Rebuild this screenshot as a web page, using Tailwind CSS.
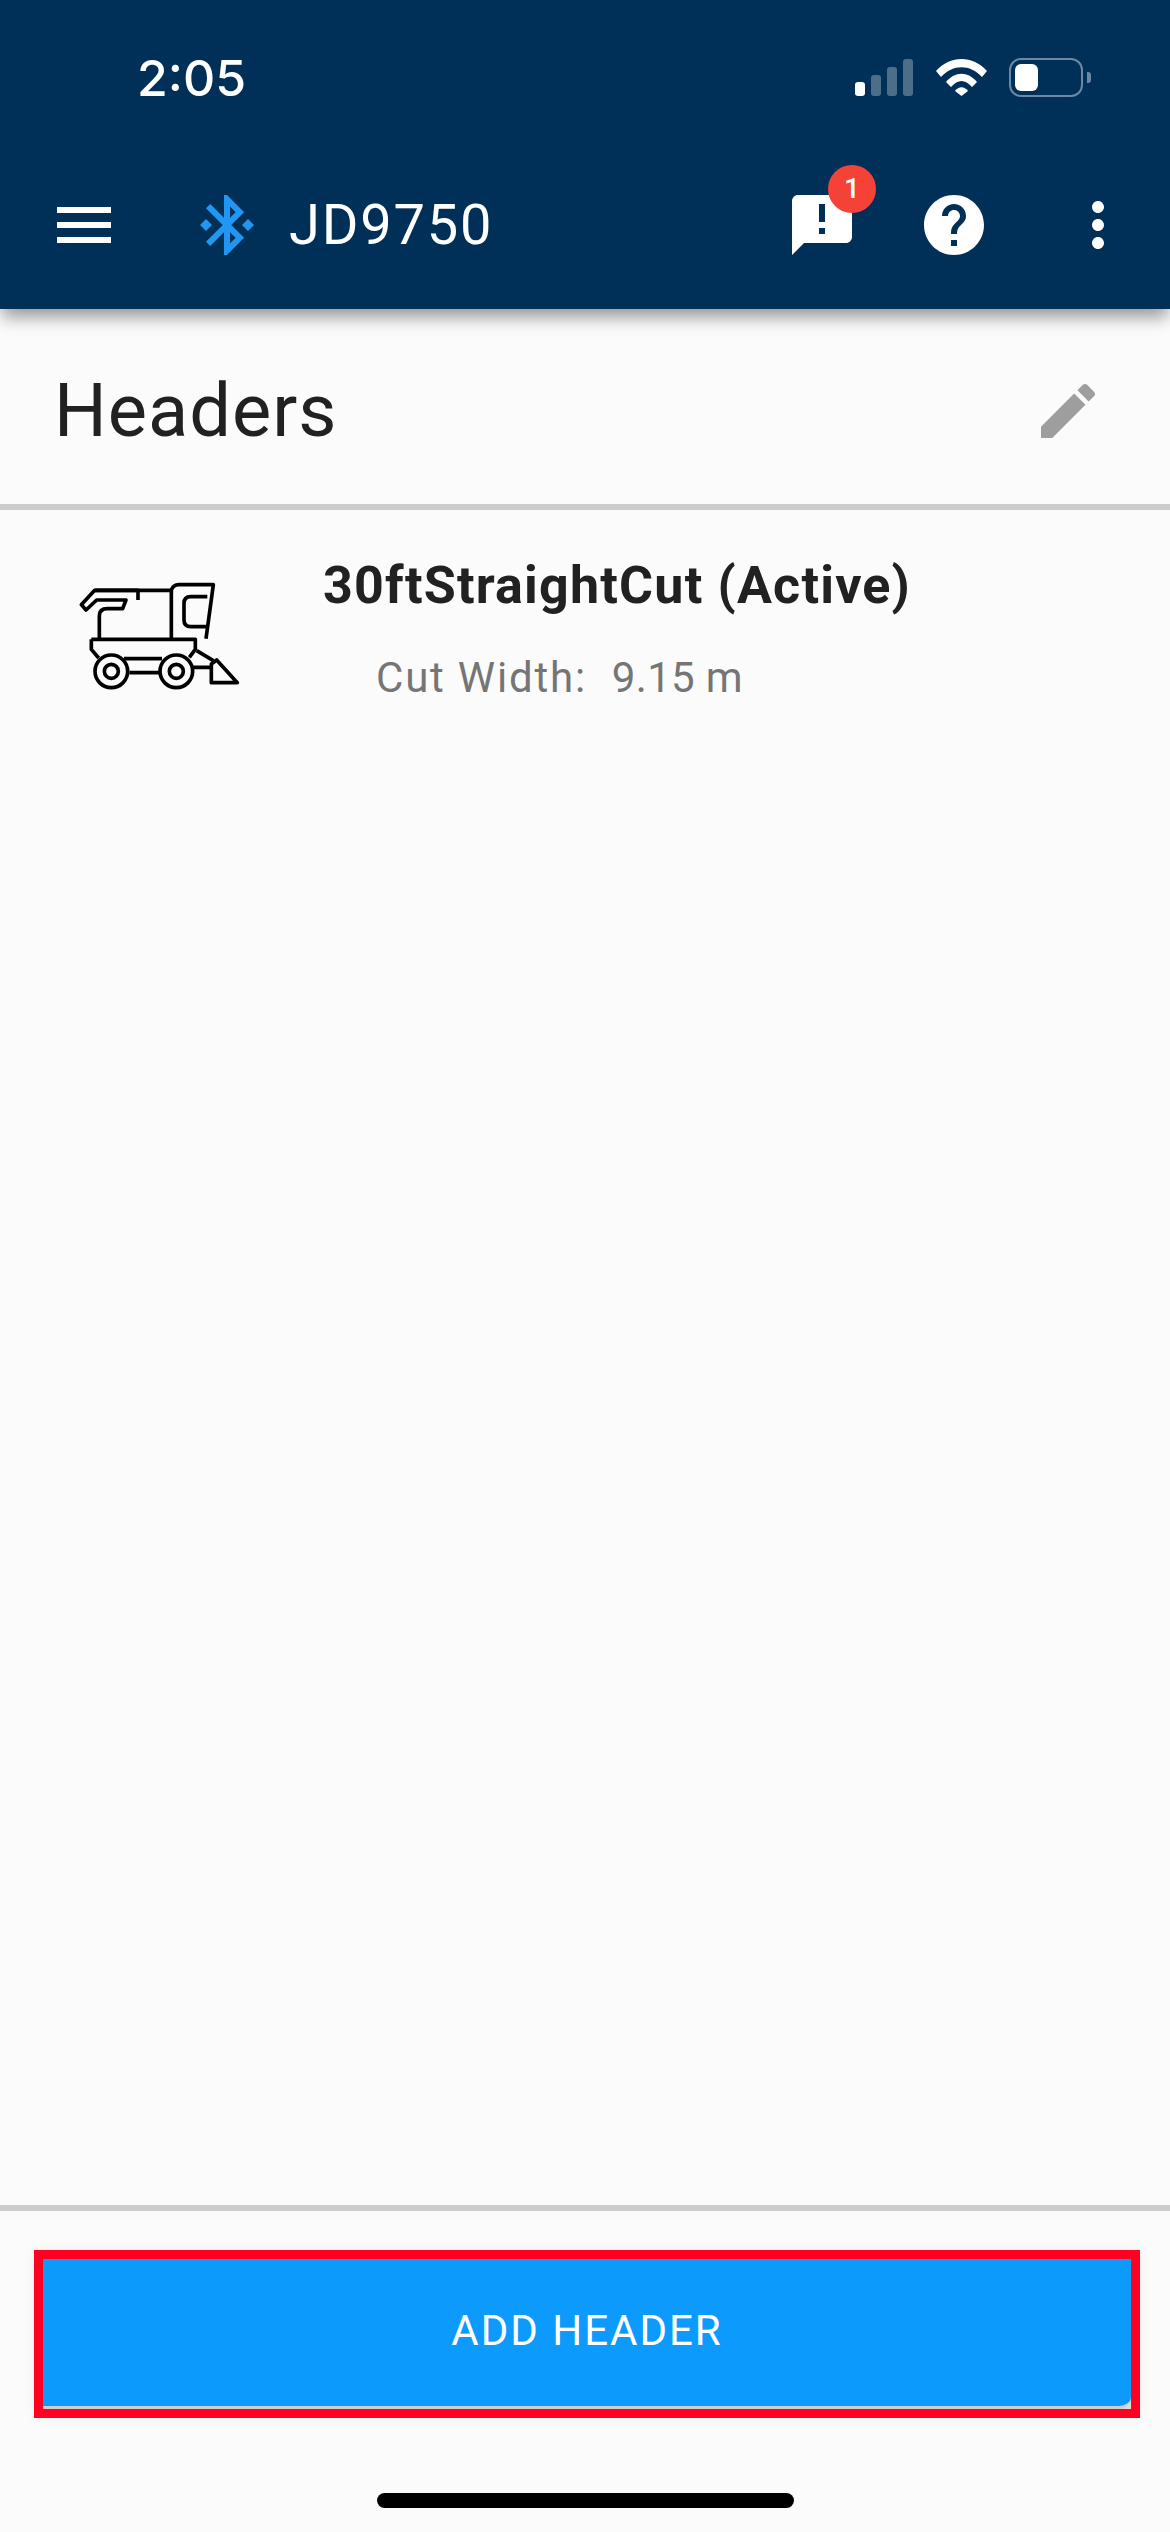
<!DOCTYPE html>
<html lang="en">
<head>
    <meta charset="UTF-8">
    <meta name="viewport" content="width=device-width, initial-scale=1.0">
    <title>Headers</title>
    <script src="https://cdn.jsdelivr.net/npm/@tailwindcss/browser@4"></script>
</head>
<body class="bg-[#fbfbfb] font-['Roboto',sans-serif]">
    <div class="w-[1170px] h-[2532px] flex flex-col overflow-hidden">
        <!-- app bar with status bar -->
        <header class="relative z-10 h-[309px] shrink-0 bg-[#003057] shadow-[0_10px_16px_-2px_rgba(0,0,0,0.4)] text-white">
            <div class="h-[155px] pl-[137px] pr-[79px] flex items-center justify-between">
                <span class="font-['Inter',sans-serif] font-medium text-[50px] leading-none">2:05</span>
                <div class="flex items-center">
                    <div class="flex items-end gap-[6px] h-[37px]">
                        <div class="w-[10px] h-[14px] rounded-[3px] bg-white"></div>
                        <div class="w-[10px] h-[21px] rounded-[3px] bg-white/30"></div>
                        <div class="w-[10px] h-[29px] rounded-[3px] bg-white/30"></div>
                        <div class="w-[10px] h-[37px] rounded-[3px] bg-white/30"></div>
                    </div>
                    <svg class="ml-[23px]" width="51" height="37" viewBox="0 0 51 37" fill="#fff">
                        <path d="M0 12 C14 -4 37 -4 51 12 L46 18 C34 5 17 5 5 18 Z"/>
                        <path d="M10 23 C19 12 32 12 41 23 L36 28 C29 20 22 20 15 28 Z"/>
                        <path d="M19 32 C23 27 28 27 32 32 L25.500 37 Z"/>
                    </svg>
                    <div class="ml-[22px] w-[74px] h-[39px] rounded-[12px] border-2 border-[#6b88a5] pl-[4px] py-[4px]">
                        <div class="w-[23px] h-full rounded-[6px] bg-white"></div>
                    </div>
                    <div class="ml-[4px] w-[4px] h-[11px] rounded-r-[3px] bg-[#6b88a5]"></div>
                </div>
            </div>
            <div class="h-[140px] flex items-center pl-[57px]">
                <div class="flex flex-col gap-[9px] w-[54px]">
                    <div class="h-[6px] bg-white"></div>
                    <div class="h-[6px] bg-white"></div>
                    <div class="h-[6px] bg-white"></div>
                </div>
                <svg class="ml-[80px] text-[#2196f3]" width="72" height="72" viewBox="0 0 24 24" fill="currentColor">
                    <path d="M7 12l-2-2-2 2 2 2 2-2zm10.710-4.290L12 2h-1v7.590L6.410 5 5 6.410 10.590 12 5 17.590 6.410 19 11 14.410V22h1l5.710-5.710-4.300-4.290 4.300-4.290zM13 5.830l1.880 1.880L13 9.590V5.830zm1.880 10.460L13 18.170v-3.760l1.880 1.880zM19 10l-2 2 2 2 2-2-2-2z"/>
                </svg>
                <span class="ml-[26px] text-[56px] leading-none tracking-[1.800px]">JD9750</span>
                <div class="relative ml-auto w-[72px] h-[72px] mr-[60px]">
                    <svg width="72" height="72" viewBox="0 0 24 24" fill="#fff">
                        <path d="M20 2H4c-1.100 0-2 .9-2 2v18l4-4h14c1.100 0 2-.9 2-2V4c0-1.100-.9-2-2-2zm-7 9h-2V5h2v6zm0 4h-2v-2h2v2z"/>
                    </svg>
                    <div class="absolute left-[42px] top-[-24px] w-[48px] h-[48px] rounded-full bg-[#f44336] flex items-center justify-center text-[28px] font-medium leading-none">1</div>
                </div>
                <svg class="mr-[72px]" width="72" height="72" viewBox="0 0 24 24" fill="#fff">
                    <path d="M12 2C6.480 2 2 6.480 2 12s4.480 10 10 10 10-4.480 10-10S17.520 2 12 2zm1 17h-2v-2h2v2zm2.070-7.750l-.9.920C13.450 12.900 13 13.500 13 15h-2v-.5c0-1.100.45-2.100 1.170-2.830l1.240-1.260c.37-.36.59-.86.59-1.410 0-1.100-.9-2-2-2s-2 .9-2 2H8c0-2.210 1.790-4 4-4s4 1.790 4 4c0 .88-.36 1.680-.93 2.250z"/>
                </svg>
                <svg class="mr-[36px]" width="72" height="72" viewBox="0 0 24 24" fill="#fff">
                    <path d="M12 8c1.100 0 2-.9 2-2s-.9-2-2-2-2 .9-2 2 .9 2 2 2zm0 2c-1.100 0-2 .9-2 2s.9 2 2 2 2-.9 2-2-.9-2-2-2zm0 6c-1.100 0-2 .9-2 2s.9 2 2 2 2-.9 2-2-.9-2-2-2z"/>
                </svg>
            </div>
        </header>

        <!-- title row -->
        <div class="h-[201px] shrink-0 flex items-center justify-between pt-[9px] pl-[54px] pr-[66px] border-b-[6px] border-[#cccccc]">
            <h1 class="text-[74px] leading-none text-[#212121] tracking-[1px]">Headers</h1>
            <svg width="72" height="72" viewBox="0 0 24 24" fill="#9e9e9e">
                <path d="M3 17.250V21h3.750L17.810 9.940l-3.750-3.750L3 17.250zM20.710 7.040c.39-.39.39-1.020 0-1.410l-2.340-2.340c-.39-.39-1.020-.39-1.410 0l-1.830 1.830 3.750 3.750 1.830-1.830z"/>
            </svg>
        </div>

        <!-- header list -->
        <div class="flex-1 flex items-start pl-[50px] pt-[30px]">
            <svg width="220" height="170" viewBox="0 0 660 510" fill="none" stroke="#000" stroke-width="11" stroke-linejoin="round">
                <path d="M148 296V228Q148 206 172 206H218L228 180H140L108 210L94 194L134 151H364"/>
                <path d="M134 151H264V180"/>
                <path d="M364 296V150Q370 134 386 134H490L468 296"/>
                <path d="M472 170H422Q402 170 402 190V240Q402 260 422 260H474"/>
                <path d="M124 298H436V328L418 352"/>
                <path d="M124 298V328L146 354"/>
                <path d="M222 356H336M238 398H328"/>
                <circle cx="184" cy="394" r="49"/>
                <circle cx="184" cy="394" r="21"/>
                <circle cx="379" cy="394" r="49"/>
                <circle cx="379" cy="394" r="21"/>
                <path d="M440 332L490 362M426 382H484"/>
                <path d="M484 428V372L500 360L562 428Z"/>
            </svg>
            <div class="ml-[53px]">
                <div class="text-[52px] leading-none font-bold text-[#212121] tracking-[1.200px] mt-[20px]">30ftStraightCut (Active)</div>
                <div class="flex text-[42px] leading-none text-[#757575] mt-[45px] ml-[53px]">
                    <span class="tracking-[1.800px]">Cut Width:</span>
                    <span class="ml-[25px] tracking-[0.300px]">9.15 m</span>
                </div>
            </div>
        </div>

        <!-- footer -->
        <div class="h-[327px] shrink-0 border-t-[6px] border-[#cccccc] pt-[39px]">
            <div class="ml-[34px] mr-[30px] h-[168px] border-[9px] border-[#ff0022] bg-[#dcdcdc] shadow-[0_0_12px_rgba(0,0,0,0.05)]">
                <button class="w-full h-[150px] pb-[4px] bg-[#0c9bfd] rounded-br-[12px] border-b-[3px] border-[#cfcfcf] text-white text-[42px] tracking-[2px]">ADD HEADER</button>
            </div>
            <div class="mt-[75px] mx-auto w-[417px] h-[15px] rounded-full bg-black"></div>
        </div>
    </div>
</body>
</html>
